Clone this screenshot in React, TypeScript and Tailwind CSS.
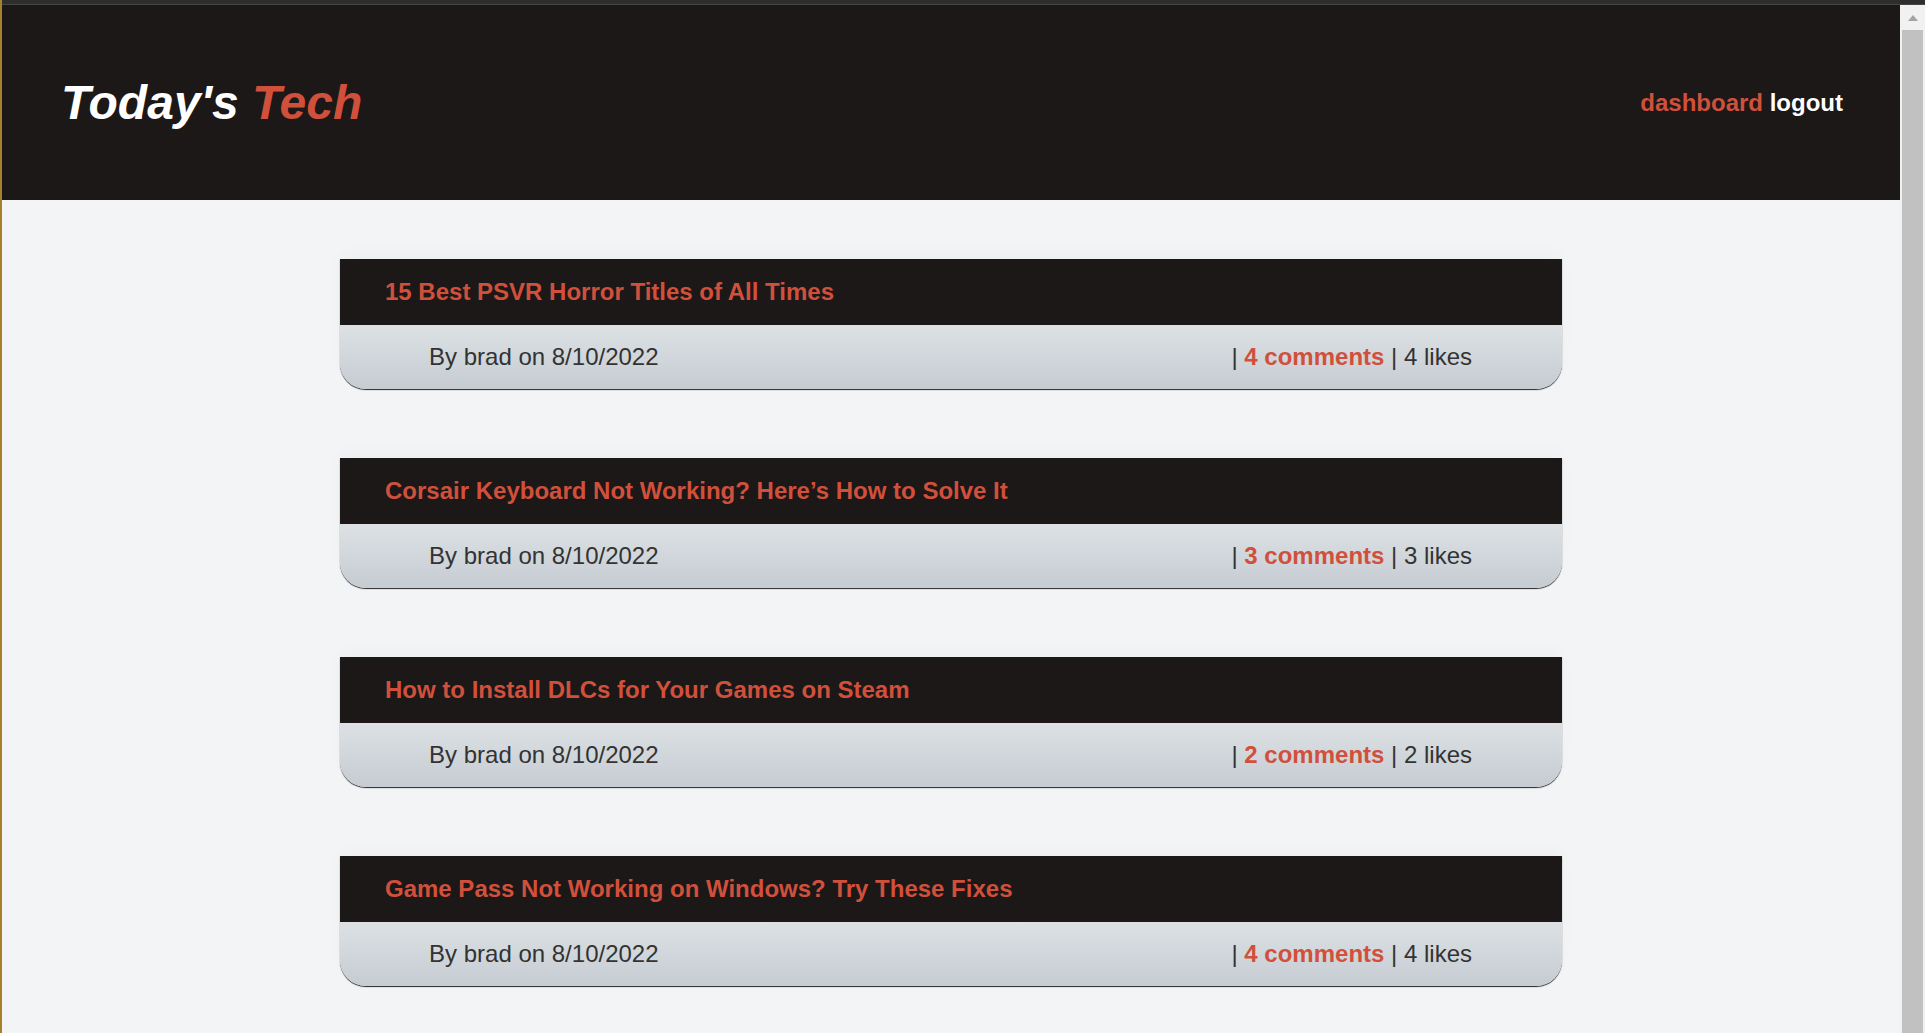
import React from 'react';

// posts shown on the home page
const POSTS = [
  { title: '15 Best PSVR Horror Titles of All Times', author: 'brad', date: '8/10/2022', comments: 4, likes: 4 },
  { title: 'Corsair Keyboard Not Working? Here\u2019s How to Solve It', author: 'brad', date: '8/10/2022', comments: 3, likes: 3 },
  { title: 'How to Install DLCs for Your Games on Steam', author: 'brad', date: '8/10/2022', comments: 2, likes: 2 },
  { title: 'Game Pass Not Working on Windows? Try These Fixes', author: 'brad', date: '8/10/2022', comments: 4, likes: 4 },
];

const PostCard = ({ post }: { post: (typeof POSTS)[number] }) => (
  <article className="w-[1222px] mx-auto rounded-b-[26px] shadow-[0_1px_1px_rgba(0,0,0,0.85),0_-6px_16px_rgba(0,0,0,0.025)]">
    <div className="h-[66px] flex items-center pl-[45px] bg-[#1c1817]">
      <h2 className="text-[24px] font-bold text-[#d1503c]">{post.title}</h2>
    </div>
    <div className="h-[64px] flex items-center justify-between pl-[89px] pr-[90px] rounded-b-[26px] bg-gradient-to-b from-[#dde1e4] to-[#c5ccd2] text-[24px] text-[#333]">
      <span>By {post.author} on {post.date}</span>
      <span>
        | <span className="font-bold text-[#d1503c]">{post.comments} comments</span> | {post.likes} likes
      </span>
    </div>
  </article>
);

export default function App() {
  return (
    <div className="h-[1033px] w-full overflow-hidden flex bg-[#f3f4f6] font-['Liberation_Sans',Arial,sans-serif]">
      {/* window frame edge */}
      <div className="w-[2px] shrink-0 bg-[#a6812c]" />

      <div className="flex-1 flex flex-col">
        <div className="h-[5px] shrink-0 bg-[#2e2e2e] border-b border-[#454545]" />

        <div className="flex-1 flex">
          <main className="flex-1 flex flex-col">
            <header className="h-[195px] shrink-0 flex items-center justify-between pl-[59px] pr-[57px] bg-[#1c1817]">
              <h1 className="text-[48px] font-bold italic text-white leading-none">
                Today's <span className="text-[#d1503c]">Tech</span>
              </h1>
              <nav className="text-[24px] font-bold">
                <a className="text-[#d1503c]">dashboard</a> <a className="text-white">logout</a>
              </nav>
            </header>

            <section className="flex flex-col gap-[69px] pt-[59px]">
              {POSTS.map((post) => (
                <PostCard key={post.title} post={post} />
              ))}
            </section>
          </main>

          {/* scrollbar */}
          <div className="w-[25px] shrink-0 flex flex-col bg-[#f1f1f1] pl-[2px] pr-[2px]">
            <div className="h-[25px] shrink-0 flex items-center justify-center">
              <div className="w-0 h-0 border-l-[5px] border-r-[5px] border-b-[6px] border-l-transparent border-r-transparent border-b-[#a3a3a3]" />
            </div>
            <div className="flex-1 bg-[#c1c1c1]" />
          </div>
        </div>
      </div>
    </div>
  );
}
